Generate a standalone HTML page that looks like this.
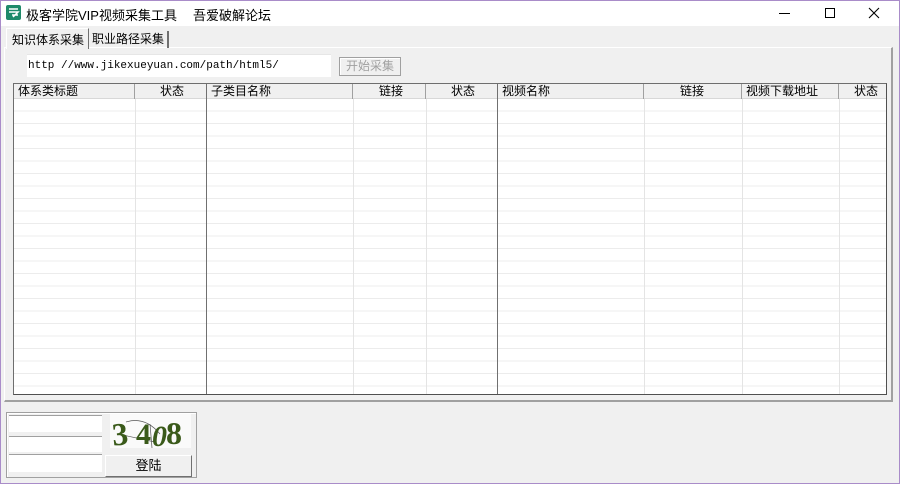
<!DOCTYPE html>
<html><head><meta charset="utf-8"><style>
*{margin:0;padding:0;box-sizing:border-box}
body{width:900px;height:484px;background:#f0f0f0;font-family:"Liberation Sans","Noto Sans CJK SC",sans-serif;font-size:12px;color:#000;position:relative;overflow:hidden;border:1px solid #a98cc9}
.a{position:absolute;white-space:nowrap}
.title{left:0;top:0;width:898px;height:25px;background:#fff}
.grid{left:12px;top:82px;width:874px;height:312px;background:#fff;border:1px solid #6e6e6e;border-right-color:#505050;border-bottom-color:#505050;overflow:hidden}
.rows{left:0;top:15px;right:0;bottom:0;background:repeating-linear-gradient(to bottom,transparent 0,transparent 11.5px,#ececec 11.5px,#ececec 12.5px)}
.hdr{left:0;top:0;right:0;height:15px;background:#f0f0f0;border-bottom:1px solid #d8d8d8}
.h{position:absolute;top:0;height:15px;line-height:14px;font-size:12px;border-right:1px solid #a0a0a0;padding:0 4px;overflow:hidden;white-space:nowrap}
.v{position:absolute;top:15px;bottom:0;width:1px;background:#e4e4e4}
.d{position:absolute;top:0;bottom:0;width:1px;background:#707070}
</style></head><body>
<div class="a title"></div>
<div class="a" style="left:5px;top:4px;width:15px;height:15px;background:#1f8a6a;border-radius:2px"><svg width="15" height="15"><path d="M3 4h9M3 7h9l-5 5M6 10h6" stroke="#fff" stroke-width="1.5" fill="none"/></svg></div>
<div class="a" style="left:25px;top:4px;font-size:13px">极客学院VIP视频采集工具</div>
<div class="a" style="left:192px;top:4px;font-size:13px">吾爱破解论坛</div>
<div class="a" style="left:778px;top:12px;width:11px;height:1px;background:#000"></div>
<div class="a" style="left:824px;top:7px;width:10px;height:10px;border:1px solid #000"></div>
<svg class="a" style="left:867px;top:6px" width="12" height="12"><path d="M1 1L11 11M11 1L1 11" stroke="#000" stroke-width="1.1"/></svg>
<div class="a" style="left:3px;top:46px;width:889px;height:355px;border:1px solid #fff;border-right-color:#a0a0a0;border-bottom-color:#a0a0a0;border-right-width:2px;border-bottom-width:2px"></div>
<div class="a" style="left:5px;top:27px;width:83px;height:21px;background:#f0f0f0;border:1px solid #fff;border-bottom:none;border-right:1px solid #707070;padding:2px 0 0 5px;font-size:12px">知识体系采集</div>
<div class="a" style="left:88px;top:30px;width:80px;height:17px;border-right:2px solid #707070;padding:0 0 0 3px;font-size:12px;line-height:17px">职业路径采集</div>
<div class="a" style="left:26px;top:53px;width:304px;height:23px;background:#fff;border-top:1px solid #e6e6e6;font-family:'Liberation Mono',monospace;font-size:11px;padding:5px 0 0 1px">http //www.jikexueyuan.com/path/html5/</div>
<div class="a" style="left:338px;top:56px;width:62px;height:19px;border:1px solid #a0a0a0;box-shadow:inset 1px 1px #fff;color:#a0a0a0;text-align:center;line-height:17px;font-size:12px">开始采集</div>
<div class="a grid">
 <div class="a rows"></div>
 <div class="a hdr"></div>
 <div class="h" style="left:0;width:121px">体系类标题</div>
 <div class="h" style="left:121px;width:72px;text-align:right;padding-right:22px">状态</div>
 <div class="h" style="left:193px;width:146px">子类目名称</div>
 <div class="h" style="left:339px;width:73px;text-align:right;padding-right:22px">链接</div>
 <div class="h" style="left:412px;width:72px;text-align:right;padding-right:22px">状态</div>
 <div class="h" style="left:484px;width:146px">视频名称</div>
 <div class="h" style="left:630px;width:98px;text-align:right;padding-right:37px">链接</div>
 <div class="h" style="left:728px;width:97px">视频下载地址</div>
 <div class="h" style="left:825px;width:49px;text-align:right;padding-right:10px;border-right:none">状态</div>
 <div class="v" style="left:121px"></div><div class="v" style="left:339px"></div><div class="v" style="left:412px"></div><div class="v" style="left:630px"></div><div class="v" style="left:728px"></div><div class="v" style="left:825px"></div>
 <div class="d" style="left:192px"></div><div class="d" style="left:483px"></div>
</div>
<div class="a" style="left:5px;top:411px;width:191px;height:66px;border:1px solid #a0a0a0;box-shadow:inset 1px 1px #fff"></div>
<div class="a" style="left:8px;top:414px;width:93px;height:17px;background:#fff;border-top:1px solid #a0a0a0"></div>
<div class="a" style="left:8px;top:435px;width:93px;height:16px;background:#fff;border-top:1px solid #a0a0a0"></div>
<div class="a" style="left:8px;top:453px;width:93px;height:18px;background:#fff;border-top:1px solid #a0a0a0"></div>
<div class="a" style="left:109px;top:413px;width:81px;height:34px;background:#fafafa;overflow:hidden">
<svg width="81" height="34"><path d="M16 8Q35 2 50 20M40 10L42 34M8 20L45 28" stroke="#555" stroke-width="0.7" fill="none"/>
<text x="2" y="31" font-family="Liberation Serif,serif" font-size="32" font-weight="bold" fill="#3a5a1a" transform="rotate(-5 10 20)">3</text>
<text x="26" y="30" font-family="Liberation Serif,serif" font-size="30" font-weight="bold" fill="#3a5a1a">4</text>
<text x="42" y="32" font-family="Liberation Serif,serif" font-size="30" font-weight="bold" font-style="italic" fill="#3a5a1a">0</text>
<text x="56" y="30" font-family="Liberation Serif,serif" font-size="32" font-weight="bold" fill="#3a5a1a">8</text></svg></div>
<div class="a" style="left:104px;top:454px;width:87px;height:22px;border:1px solid #707070;border-top-color:#fff;border-left-color:#fff;background:#f0f0f0;text-align:center;line-height:20px;font-size:13px">登陆</div>
</body></html>
